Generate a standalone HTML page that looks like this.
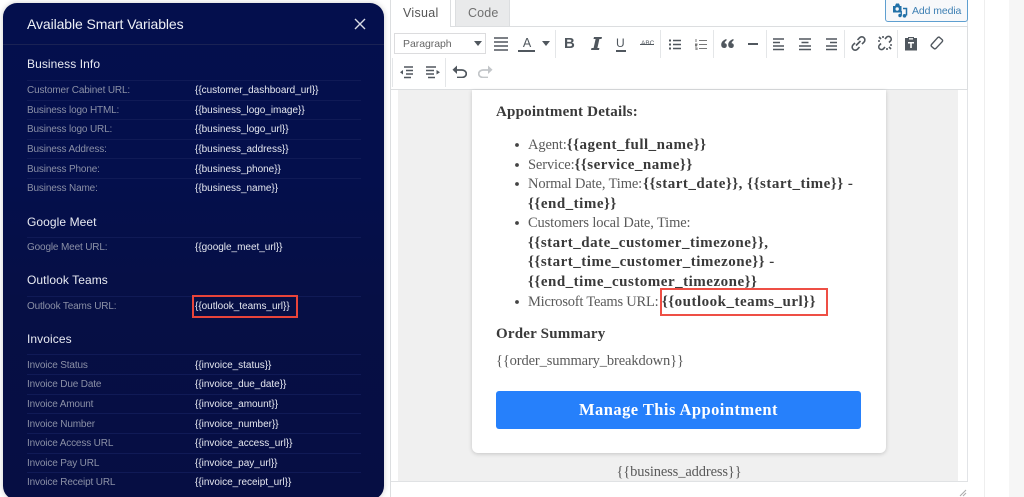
<!DOCTYPE html>
<html lang="en"><head><meta charset="utf-8"><title>Available Smart Variables</title>
<style>
html,body{margin:0;padding:0;width:1024px;height:497px;overflow:hidden;background:#fff}
body{position:relative;font-family:"Liberation Sans",sans-serif}
div,svg{position:absolute}
.t{white-space:nowrap;height:14px;line-height:14px}
.l{left:27px;font-size:10px;color:#8b90a6;letter-spacing:-.15px;margin-top:1px}
.v{left:195px;font-size:10px;color:#e6e8f0;letter-spacing:-.02px;margin-top:1px}
.h{left:27px;font-size:12px;color:#e8eaf2;letter-spacing:.08px}
.r{left:27px;width:334px;height:1px;background:#101a56}
.s{font-family:"Liberation Serif",serif;font-size:14.5px;color:#5a5a5a;white-space:nowrap;height:20px;line-height:20px;letter-spacing:-.13px}
.s b,.b{color:#3a3a3a;font-weight:700;font-size:15px;letter-spacing:.5px}
.sep{width:1px;background:#e4e6e8}
.i{fill:none;stroke:#50575e;stroke-width:1.6}
.f{fill:#50575e;stroke:none}
</style></head><body>
<!-- page background columns -->
<div style="left:967px;top:0;width:1px;height:497px;background:#e2e4e7"></div>
<div style="left:984px;top:0;width:1px;height:497px;background:#eee"></div>
<div style="left:1009px;top:0;width:15px;height:497px;background:#f6f6f6"></div>

<!-- tabs -->
<div style="left:455px;top:-2px;width:55px;height:28px;background:#e9eaeb;border:1px solid #dcdee0;border-bottom:0;box-sizing:border-box"></div>
<div class="t" style="left:468px;top:6px;font-size:12.5px;color:#707070;letter-spacing:.15px">Code</div>
<div style="left:390px;top:-2px;width:61px;height:29px;background:#fff;border:1px solid #dcdee0;border-bottom:0;box-sizing:border-box;z-index:2"></div>
<div class="t" style="left:403px;top:6px;font-size:12.5px;color:#555;letter-spacing:.3px;z-index:3">Visual</div>

<!-- add media -->
<div style="left:885px;top:-3px;width:83px;height:25px;box-sizing:border-box;border:1px solid #5f9fd0;border-radius:3px;background:#f7f8fa"></div>
<svg style="left:892px;top:3px" width="16" height="15" viewBox="0 0 16 15"><path fill="#2271a8" d="M1 3h2l1-2.500h3L8 3h1.500v6.500H1z"/><circle cx="5.200" cy="6" r="1.700" fill="#f7f8fa"/><path fill="none" stroke="#2271a8" stroke-width="1.500" d="M11 5.500h3.500v7"/><circle cx="12.500" cy="12.800" r="1.800" fill="#2271a8"/><circle cx="8" cy="12.500" r="1.700" fill="#2271a8"/><path stroke="#2271a8" stroke-width="1.300" d="M9.300 12.500V8"/></svg>
<div class="t" style="left:912px;top:4px;font-size:10.500px;color:#3d7fb3;letter-spacing:-.1px">Add media</div>

<!-- toolbar -->
<div style="left:390px;top:26px;width:578px;height:64px;box-sizing:border-box;border:1px solid #dcdee0;background:#fff"></div>
<div style="left:394px;top:33px;width:92px;height:21px;box-sizing:border-box;border:1px solid #dcdcde;background:#fff"></div>
<div class="t" style="left:403px;top:37px;font-size:10.500px;color:#666;letter-spacing:-.05px">Paragraph</div>
<svg style="left:474px;top:41px" width="8" height="6"><path class="f" d="M0 0h8L4 5z"/></svg>
<svg style="left:494px;top:37px" width="15" height="14"><path class="i" d="M0 1h14M0 5h14M0 9h14M0 13h14"/></svg>
<div class="t" style="left:518px;top:36px;width:18px;text-align:center;font-size:12.5px;color:#50575e">A</div>
<div style="left:518px;top:50px;width:17px;height:2px;background:#50575e"></div>
<svg style="left:542px;top:41px" width="8" height="6"><path class="f" d="M0 0h8L4 5z"/></svg>
<div class="sep" style="left:555px;top:30px;height:28px"></div>
<div class="t" style="left:564px;top:37px;font-size:15px;font-weight:700;color:#50575e">B</div>
<svg style="left:590px;top:37px" width="12" height="13"><path class="f" d="M4 0h8l-.5 2H9.400L7.400 11h2L9 13H1l.5-2h2.100l2-9H3.500z"/></svg>
<div class="t" style="left:616px;top:36px;font-size:12px;color:#50575e">U</div>
<div style="left:616px;top:50px;width:10px;height:1.500px;background:#50575e"></div>
<div class="t" style="left:641px;top:37px;font-size:6.500px;color:#50575e;letter-spacing:0">ABC</div>
<div style="left:640px;top:44px;width:14px;height:1px;background:#50575e"></div>
<div class="sep" style="left:660px;top:30px;height:28px"></div>
<svg style="left:669px;top:39px" width="12" height="11"><path class="i" stroke-width="1" d="M4 1.500h8M4 5.500h8M4 9.500h8"/><path class="f" d="M0 .5h2v2H0zM0 4.500h2v2H0zM0 8.500h2v2H0z"/></svg>
<svg style="left:695px;top:39px" width="12" height="11"><path fill="none" stroke="#777" stroke-width="1" d="M4 1.500h8M4 5.500h8M4 9.500h8M1 0v3M0 5h2v1H0v1h2M0 9h2v2H0"/></svg>
<div class="sep" style="left:713px;top:30px;height:28px"></div>
<svg style="left:721px;top:39px" width="13" height="10"><path class="f" d="M5.500 0L5.500 1.500C4.300 2.300 3.700 3.200 3.600 4.300 5 4.300 5.800 5.200 5.800 6.500 5.800 8 4.700 9 3.200 9 1.300 9 .2 7.700.2 5.800.2 3.200 2 1 5.500 0zM12.500 0V1.500C11.300 2.300 10.700 3.200 10.600 4.300 12 4.300 12.800 5.200 12.800 6.500 12.800 8 11.700 9 10.200 9 8.300 9 7.200 7.700 7.200 5.800 7.200 3.200 9 1 12.500 0z"/></svg>
<div style="left:748px;top:43px;width:10px;height:2px;background:#50575e"></div>
<div class="sep" style="left:766px;top:30px;height:28px"></div>
<svg style="left:773px;top:38px" width="12" height="13"><path class="i" d="M0 1h11M0 4.500h7M0 8h11M0 11.500h11"/></svg>
<svg style="left:799px;top:38px" width="12" height="13"><path class="i" d="M0 1h12M2.500 4.500h7M0 8h12M0 11.500h12"/></svg>
<svg style="left:825px;top:38px" width="12" height="13"><path class="i" d="M1 1h11M5 4.500h7M1 8h11M1 11.500h11"/></svg>
<div class="sep" style="left:844px;top:30px;height:28px"></div>
<svg style="left:851px;top:36px" width="15" height="15"><path class="i" stroke-width="1.500" d="M5 9.500l4.500-4.500M6.500 4l2-2.200a2.700 2.700 0 0 1 4.500 4.300l-2 2M8.500 11l-2 2.200a2.700 2.700 0 0 1-4.500-4.300l2-2"/></svg>
<svg style="left:877px;top:35px" width="16" height="16"><path class="i" stroke-width="1.500" d="M8 4l1.500-1.700a2.700 2.700 0 0 1 4 3.700L12 7.500M8 12l-1.500 1.700a2.700 2.700 0 0 1-4-3.700L4 8.500M2 2l2 2M14 14l-2-2M1 6h2M13 10h2M6 1v2M10 13v2"/></svg>
<div class="sep" style="left:897px;top:30px;height:28px"></div>
<svg style="left:904px;top:36px" width="14" height="15"><path class="f" d="M1 2h3V1h6v1h3v12.500H1z"/><path fill="#fff" d="M4 6h6v1.500H7.800V12H6.200V7.500H4z"/><path fill="#fff" d="M5 2.200h4v1.300H5z"/></svg>
<svg style="left:930px;top:36px" width="14" height="14"><path fill="none" stroke="#50575e" stroke-width="1.400" d="M1.500 8.500L7.500 1.800c.8-.8 1.700-.8 2.300-.2l2.300 2c.7.600.7 1.500 0 2.200L6 12.300c-.8.700-1.600.7-2.300 0L1.600 10.500c-.6-.6-.6-1.300-.1-2z"/></svg>

<div class="sep" style="left:392px;top:58px;height:29px"></div>
<svg style="left:400px;top:66px" width="14" height="13"><path class="i" d="M4 1h9M6 4.500h7M6 8h7M4 11.500h7" stroke-width="1.400"/><path class="f" d="M0 6.200L3 4v4.500z"/></svg>
<svg style="left:426px;top:66px" width="14" height="13"><path class="i" d="M0 1h10M0 4.500h8M0 8h8M2 11.500h7" stroke-width="1.400"/><path class="f" d="M14 6.200L10.500 4v4.500z"/></svg>
<div class="sep" style="left:445px;top:58px;height:29px"></div>
<svg style="left:452px;top:64px" width="15" height="14"><path fill="none" stroke="#50575e" stroke-width="1.700" d="M4 6h6a4 3.500 0 0 1 0 7.500H5"/><path class="f" d="M5 1.500v8.500L.5 5.700z"/></svg>
<svg style="left:478px;top:64px" width="15" height="14"><path fill="none" stroke="#c3c6c9" stroke-width="1.700" d="M11 6H5a4 3.500 0 0 0 0 7.500h5"/><path fill="#c3c6c9" d="M10 1.500v8.500l4.500-4.300z"/></svg>

<!-- content area -->
<div style="left:398px;top:90px;width:560px;height:391px;background:#f0f0f0"></div>
<div style="left:390px;top:90px;width:1px;height:407px;background:#dcdee0"></div>
<div style="left:472px;top:90px;width:414px;height:363px;background:#fff;border-radius:0 0 6px 6px;box-shadow:0 1px 4px rgba(0,0,0,.18)"></div>

<div class="s b" style="left:496px;top:102px;letter-spacing:.2px">Appointment Details:</div>
<svg style="left:514px;top:141px" width="8" height="170"><g fill="#444"><circle cx="3" cy="4" r="1.900"/><circle cx="3" cy="24" r="1.900"/><circle cx="3" cy="43" r="1.900"/><circle cx="3" cy="82" r="1.900"/><circle cx="3" cy="161" r="1.900"/></g></svg>
<div class="s" style="left:528px;top:135px">Agent:<b>{{agent_full_name}}</b></div>
<div class="s" style="left:528px;top:155px">Service:<b>{{service_name}}</b></div>
<div class="s" style="left:528px;top:174px">Normal Date, Time:<b style="margin-left:1px">{{start_date}}, {{start_time}} -</b></div>
<div class="s" style="left:528px;top:194px"><b>{{end_time}}</b></div>
<div class="s" style="left:528px;top:213px">Customers local Date, Time:</div>
<div class="s" style="left:528px;top:233px"><b>{{start_date_customer_timezone}},</b></div>
<div class="s" style="left:528px;top:252px"><b>{{start_time_customer_timezone}} -</b></div>
<div class="s" style="left:528px;top:272px"><b>{{end_time_customer_timezone}}</b></div>
<div class="s" style="left:528px;top:292px;letter-spacing:-.22px">Microsoft Teams URL: <b>{{outlook_teams_url}}</b></div>
<div style="left:660px;top:288px;width:168px;height:28px;box-sizing:border-box;border:2px solid #ee4f45"></div>
<div class="s b" style="left:496px;top:324px;letter-spacing:.2px">Order Summary</div>
<div class="s" style="left:496px;top:351px">{{order_summary_breakdown}}</div>
<div style="left:496px;top:391px;width:365px;height:38px;background:#2680fb;border-radius:3px;color:#fff;text-align:center;font:700 16.500px/38px 'Liberation Serif',serif;letter-spacing:.45px">Manage This Appointment</div>
<div class="s" style="left:472px;width:414px;text-align:center;top:462px">{{business_address}}</div>
<div style="left:391px;top:481px;width:577px;height:16px;background:#fff;border-top:1px solid #e0e2e4;box-sizing:border-box;z-index:1"></div>
<svg style="left:959px;top:489px;z-index:2" width="8" height="8"><path stroke="#aaa" fill="none" d="M1 7L7 1M4 7l3-3"/></svg>

<!-- modal -->
<div style="left:3px;top:3px;width:381px;height:497px;border-radius:14px;background:linear-gradient(180deg,#040f4d 0%,#040f4c 35%,#060f45 60%,#060e43 100%);box-shadow:0 0 6px rgba(0,0,0,.2);z-index:5"></div>
<div style="z-index:6;left:0;top:0;width:390px;height:497px">
<div class="t" style="left:27px;top:17px;font-size:14px;color:#eef0f6;letter-spacing:-.1px">Available Smart Variables</div>
<svg style="left:354px;top:18px" width="12" height="12"><path stroke="#d8dbe6" stroke-width="1.400" fill="none" d="M1 1l10 10M11 1L1 11"/></svg>
<div style="left:3px;top:44px;width:381px;height:1px;background:#1a2254"></div>

<div class="t h" style="top:57px">Business Info</div>
<div class="r" style="top:80px"></div><div class="t l" style="top:83px">Customer Cabinet URL:</div><div class="t v" style="top:83px">{{customer_dashboard_url}}</div>
<div class="r" style="top:100px"></div><div class="t l" style="top:103px">Business logo HTML:</div><div class="t v" style="top:103px">{{business_logo_image}}</div>
<div class="r" style="top:119px"></div><div class="t l" style="top:122px">Business logo URL:</div><div class="t v" style="top:122px">{{business_logo_url}}</div>
<div class="r" style="top:139px"></div><div class="t l" style="top:142px">Business Address:</div><div class="t v" style="top:142px">{{business_address}}</div>
<div class="r" style="top:158px"></div><div class="t l" style="top:162px">Business Phone:</div><div class="t v" style="top:162px">{{business_phone}}</div>
<div class="r" style="top:178px"></div><div class="t l" style="top:181px">Business Name:</div><div class="t v" style="top:181px">{{business_name}}</div>

<div class="t h" style="top:215px">Google Meet</div>
<div class="r" style="top:237px"></div><div class="t l" style="top:240px">Google Meet URL:</div><div class="t v" style="top:240px">{{google_meet_url}}</div>

<div class="t h" style="top:273px">Outlook Teams</div>
<div class="r" style="top:296px"></div><div class="t l" style="top:299px">Outlook Teams URL:</div><div class="t v" style="top:299px">{{outlook_teams_url}}</div>
<div style="left:192px;top:295px;width:106px;height:23px;box-sizing:border-box;border:2px solid #e8443a"></div>

<div class="t h" style="top:332px">Invoices</div>
<div class="r" style="top:354px"></div><div class="t l" style="top:358px">Invoice Status</div><div class="t v" style="top:358px">{{invoice_status}}</div>
<div class="r" style="top:374px"></div><div class="t l" style="top:377px">Invoice Due Date</div><div class="t v" style="top:377px">{{invoice_due_date}}</div>
<div class="r" style="top:394px"></div><div class="t l" style="top:397px">Invoice Amount</div><div class="t v" style="top:397px">{{invoice_amount}}</div>
<div class="r" style="top:413px"></div><div class="t l" style="top:417px">Invoice Number</div><div class="t v" style="top:417px">{{invoice_number}}</div>
<div class="r" style="top:433px"></div><div class="t l" style="top:436px">Invoice Access URL</div><div class="t v" style="top:436px">{{invoice_access_url}}</div>
<div class="r" style="top:453px"></div><div class="t l" style="top:456px">Invoice Pay URL</div><div class="t v" style="top:456px">{{invoice_pay_url}}</div>
<div class="r" style="top:472px"></div><div class="t l" style="top:475px">Invoice Receipt URL</div><div class="t v" style="top:475px">{{invoice_receipt_url}}</div>
</div>
</body></html>
